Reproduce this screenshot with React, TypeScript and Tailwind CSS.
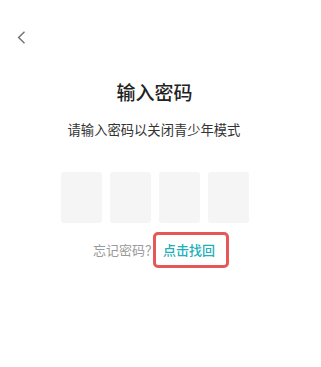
export default function App() {
  const cells = [0, 1, 2, 3];
  return (
    <div
      className="w-[321px] h-[367px] bg-white flex flex-col"
      style={{ fontFamily: '"Noto Sans CJK SC", "Noto Sans", sans-serif' }}
    >
      <div className="h-[31px]" />
      <div className="pl-[17px] h-[12px] flex">
        <svg width="9" height="13" viewBox="0 0 9 13" fill="none">
          <path d="M7.5 0.8 L1.6 6.5 L7.5 12.2" stroke="#707070" strokeWidth="1.4" />
        </svg>
      </div>
      <div className="mt-[36px] pr-[12px] text-center text-[19px] leading-[26px] font-medium text-[#222]">
        输入密码
      </div>
      <div className="mt-[15px] pr-[13px] text-center text-[13.3px] leading-[20px] text-[#333]">
        请输入密码以关闭青少年模式
      </div>
      <div className="mt-[32px] flex justify-center gap-[8px] pr-[12px]">
        {cells.map((i) => (
          <div key={i} className="w-[41px] h-[51px] rounded-[3px] bg-[#f5f5f5]" />
        ))}
      </div>
      <div className="mt-[9px] flex justify-center items-center pl-[1px]">
        <span className="text-[13px] leading-[18px] text-[#999]">忘记密码？</span>
        <div className="relative -ml-[5px] h-[36px] w-[76px] border-[3px] border-[#e65757] rounded-[5px] flex items-center justify-center pr-[4px]">
          <span className="text-[13px] leading-[18px] font-medium text-[#22aebb]">点击找回</span>
        </div>
      </div>
    </div>
  );
}
